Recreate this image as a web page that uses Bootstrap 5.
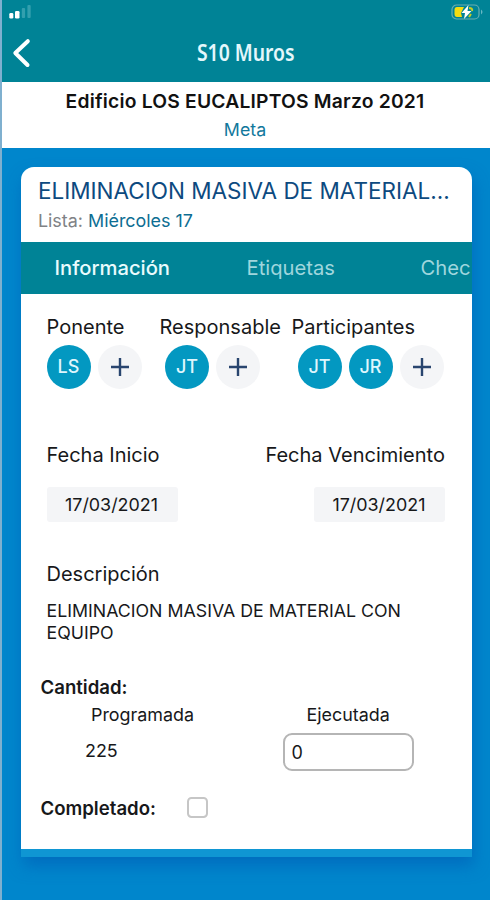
<!DOCTYPE html>
<html lang="es">
<head>
<meta charset="utf-8">
<meta name="viewport" content="width=device-width, initial-scale=1">
<title>S10 Muros</title>
<link href="https://cdn.jsdelivr.net/npm/bootstrap@5.3.0/dist/css/bootstrap.min.css" rel="stylesheet">
<style>
  body { font-family: Inter, "Liberation Sans", sans-serif; color: #17181a; background: #0086cc; line-height: 1; overflow: hidden; }
  .screen { height: 900px; border-left: 2px solid #7fb0cf; background: #0086cc; }
  .topbar { height: 82px; background: #008396; }
  .status-row { height: 26px; padding: 4px 6px 0 7px; }
  .title-row { height: 54px; }
  .title-row .side { width: 60px; padding-left: 10px; }
  .app-title { font: 600 22.5px/30px "Noto Sans", sans-serif; color: #e4f7fb; transform: scaleX(.86); margin-top: -1px; }
  .project { height: 66px; padding: 8px 2px 0 0; }
  .project-name { font-size: 19.3px; letter-spacing: .2px; line-height: 22px; font-weight: 600; color: #111; }
  .project-sub { font-size: 17.8px; line-height: 20px; margin-top: 8px; color: #12789c; }
  .panel-wrap { margin: 19px 18.5px 0 18.5px; height: 690px; background: #0f96d3; border-radius: 13px 13px 0 0; box-shadow: 2px 9px 16px rgba(0,90,180,.55); }
  .panel-body { height: 682px; border-radius: 13px 13px 0 0; overflow: hidden; }
  .task-head { height: 75px; padding: 11px 17.4px 0; }
  .task-name { font-size: 22.5px; line-height: 26px; color: #0d4a80; }
  .task-list { font-size: 17.9px; line-height: 20px; margin-top: 7px; color: #808285; }
  .task-list span { color: #0d6e93; }
  .tab-strip { height: 52px; background: #008396; font-size: 20.2px; color: #9fd6dd; overflow: hidden; }
  .tab-strip .on { color: #e9fbfd; font-weight: 500; }
  .tab-strip .tab1 { width: 192px; padding-left: 34px; }
  .tab-strip .tab2 { width: 174px; padding-left: 34px; }
  .tab-strip .tab3 { padding-left: 34px; }
  .people { height: 128px; padding: 22px 0 0 26px; }
  .p1 { width: 113px; } .p2 { width: 132px; }
  .lbl { font-size: 20px; line-height: 22px; }
  .dots { gap: 7px; margin-top: 7.4px; }
  .p2 .dots { padding-left: 5.5px; } .p3 .dots { padding-left: 6px; }
  .dot { width: 44px; height: 44px; background: #0398c1; color: #dff6fd; font-size: 18px; font-weight: 500; }
  .dot.add { background: #f4f5f7; }
  .dates { height: 119px; padding: 22px 26.6px 0 26px; }
  .date-box { width: 131px; height: 35px; margin-top: 21px; background: #f4f5f7; border-radius: 3px; font-size: 17.9px; padding-right: 1px; }
  .desc { height: 113px; padding: 22px 26px 0; }
  .desc-text { font-size: 17.75px; line-height: 22px; margin-top: 15px; width: 370px; }
  .form-part { padding: 23px 0 0 20px; font-size: 17.9px; line-height: 20px; }
  .strong-lbl { font-weight: 600; font-size: 18.6px; }
  .q1 { width: 242px; padding-left: 50.5px; }
  .value-a { padding: 0 0 2px 44.5px; width: 242px; }
  .qty { width: 131px; height: 38px; border: 2px solid #b5b5b5; border-radius: 9px; padding: 0 7px; font-size: 18px; color: #17181a; }
  .done-row { margin-top: 26px; }
  .check { width: 21px; height: 21px; margin: 0 0 0 31px; border: 2px solid #c6c6c6; border-radius: 5px; }
  .fit { white-space: nowrap; }
</style>
</head>
<body>
<div class="screen">
  <header class="topbar">
    <div class="status-row d-flex justify-content-between align-items-start">
      <svg width="23" height="16" viewBox="0 0 23 16"><rect x=".3" y="9" width="4" height="5.500" rx="1.300" fill="#fff"/><rect x="6" y="7" width="4.500" height="7.500" rx="1.300" fill="#fff"/><rect x="12.800" y="4" width="3.300" height="10" rx="1" fill="#329fae"/><rect x="18.400" y="1" width="3.300" height="13" rx="1" fill="#329fae"/></svg>
      <svg width="33" height="17" viewBox="0 0 33 17"><rect x="1" y="1" width="27" height="14" rx="4.500" fill="none" stroke="#68aeb0" stroke-width="1.200"/><path d="M30 5.500q3 2.500 0 5z" fill="#68b8c4"/><path d="M6 3H13L10 9L11 13H6Q3.500 13 3.500 10V6Q3.500 3 6 3Z" fill="#f5dc12"/><path d="M18 4q4 0 3 3M20 10l-2 3" fill="none" stroke="#c7cd24" stroke-width="2"/><path d="M17.500 1L10.500 9H14L13 15L20.500 7H16.500Z" fill="#fff"/></svg>
    </div>
    <div class="title-row d-flex align-items-center justify-content-between">
      <div class="side"><svg width="20" height="30" viewBox="0 0 20 30"><path d="M15.800 3.200L3.300 15L15.500 27" fill="none" stroke="#fff" stroke-width="4" stroke-linecap="round" stroke-linejoin="round"/></svg></div>
      <div class="app-title fit">S10 Muros</div>
      <div class="side"></div>
    </div>
  </header>
  <section class="project bg-white text-center">
    <div class="project-name fit">Edificio LOS EUCALIPTOS Marzo 2021</div>
    <div class="project-sub">Meta</div>
  </section>
  <main class="panel-wrap">
    <div class="panel-body bg-white">
      <div class="task-head">
        <div class="task-name fit">ELIMINACION MASIVA DE MATERIAL...</div>
        <div class="task-list fit">Lista: <span>Miércoles 17</span></div>
      </div>
      <nav class="tab-strip d-flex align-items-center">
        <div class="tab1 on flex-shrink-0">Información</div>
        <div class="tab2 flex-shrink-0">Etiquetas</div>
        <div class="tab3 flex-shrink-0">Chec</div>
      </nav>
      <div class="people d-flex">
        <div class="p1"><div class="lbl fit">Ponente</div>
          <div class="dots d-flex">
            <div class="dot rounded-circle d-flex align-items-center justify-content-center">LS</div>
            <div class="dot add rounded-circle d-flex align-items-center justify-content-center"><svg width="20" height="20" viewBox="0 0 20 20"><path d="M10 1V19M1 10H19" stroke="#29456f" stroke-width="2.400"/></svg></div>
          </div></div>
        <div class="p2"><div class="lbl fit">Responsable</div>
          <div class="dots d-flex">
            <div class="dot rounded-circle d-flex align-items-center justify-content-center">JT</div>
            <div class="dot add rounded-circle d-flex align-items-center justify-content-center"><svg width="20" height="20" viewBox="0 0 20 20"><path d="M10 1V19M1 10H19" stroke="#29456f" stroke-width="2.400"/></svg></div>
          </div></div>
        <div class="p3"><div class="lbl fit">Participantes</div>
          <div class="dots d-flex">
            <div class="dot rounded-circle d-flex align-items-center justify-content-center">JT</div>
            <div class="dot rounded-circle d-flex align-items-center justify-content-center">JR</div>
            <div class="dot add rounded-circle d-flex align-items-center justify-content-center"><svg width="20" height="20" viewBox="0 0 20 20"><path d="M10 1V19M1 10H19" stroke="#29456f" stroke-width="2.400"/></svg></div>
          </div></div>
      </div>
      <div class="dates d-flex justify-content-between">
        <div><div class="lbl fit">Fecha Inicio</div><div class="date-box d-flex align-items-center justify-content-center">17/03/2021</div></div>
        <div class="d-flex flex-column align-items-end"><div class="lbl fit">Fecha Vencimiento</div><div class="date-box d-flex align-items-center justify-content-center">17/03/2021</div></div>
      </div>
      <div class="desc">
        <div class="lbl">Descripción</div>
        <div class="desc-text">ELIMINACION MASIVA DE MATERIAL CON EQUIPO</div>
      </div>
      <div class="form-part">
        <div class="strong-lbl">Cantidad:</div>
        <div class="d-flex mt-2"><div class="q1">Programada</div><div class="ps-4">Ejecutada</div></div>
        <div class="d-flex align-items-center mt-2"><div class="value-a">225</div><input class="qty" type="text" value="0" aria-label="Ejecutada"></div>
        <div class="done-row d-flex align-items-center"><div class="strong-lbl">Completado:</div><input class="form-check-input check" type="checkbox" aria-label="Completado"></div>
      </div>
    </div>
  </main>
</div>
<script src="https://cdn.jsdelivr.net/npm/bootstrap@5.3.0/dist/js/bootstrap.bundle.min.js"></script>
</body>
</html>
